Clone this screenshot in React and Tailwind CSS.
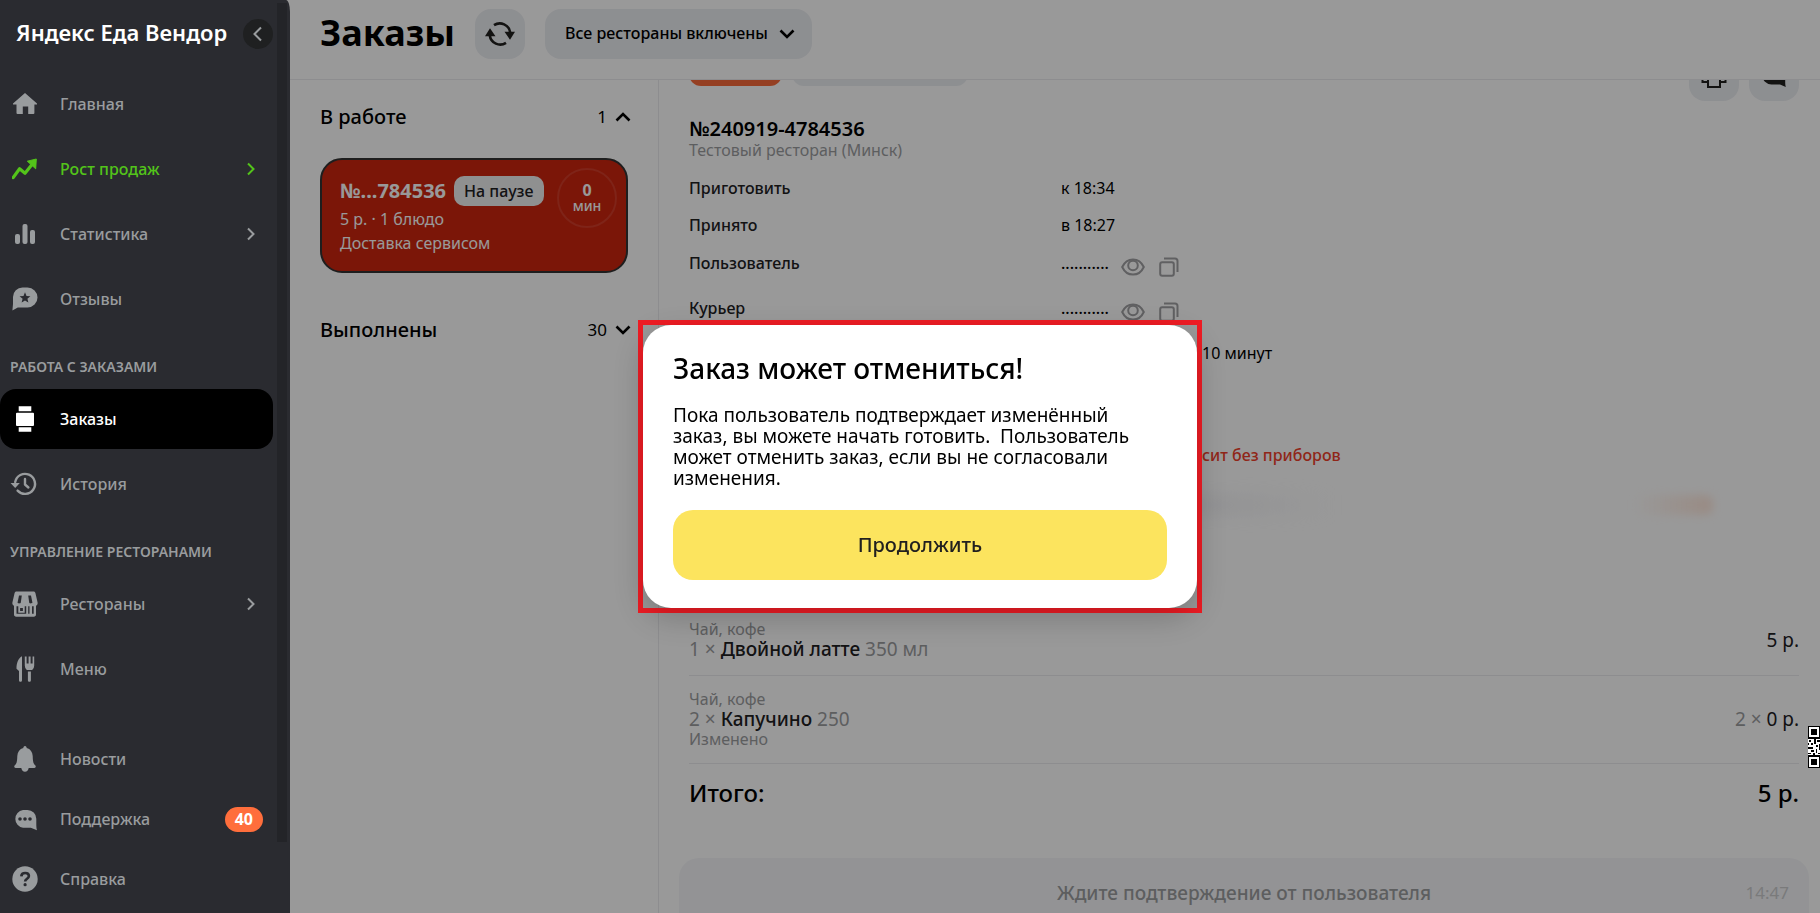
import React, { useState } from 'react';
import clsx from 'clsx';

const HomeIcon = () => (
    <svg width="26" height="26" viewBox="0 0 26 26" fill="currentColor">
        <path d="M13 2 25 12.6v.9h-2.600V22a1 1 0 0 1-1 1H16.200v-7.400h-5.400V23H5.500a1 1 0 0 1-1-1v-8.500H1v-.9z" />
    </svg>
);

const GrowthIcon = () => (
    <svg width="26" height="26" viewBox="0 0 26 26">
        <path d="M1.200 21.600 7.600 12.800 13 17.200 20 8.500" fill="none" stroke="currentColor" strokeWidth="3.200" strokeLinecap="round" strokeLinejoin="round" />
        <path d="M15.300 5.200 24.300 3l-.6 9.800z" fill="currentColor" stroke="currentColor" strokeLinejoin="round" />
    </svg>
);

const StatsIcon = () => (
    <svg width="26" height="26" viewBox="0 0 26 26" fill="currentColor">
        <rect x="3" y="13" width="5" height="10" rx="2" />
        <rect x="10.500" y="3" width="5" height="20" rx="2" />
        <rect x="18" y="9" width="5" height="14" rx="2" />
    </svg>
);

const ReviewsIcon = () => (
    <svg width="26" height="26" viewBox="0 0 26 26" fill="currentColor" fillRule="evenodd">
        <path d="M10.500 1.500h5a10 10 0 0 1 0 20H5.800L.4 24.600 1 18V11a9.500 9.500 0 0 1 9.500-9.500zM13 6.300l-1.500 3.600-3.900.3 3 2.500-1 3.800 3.400-2.100 3.400 2.100-1-3.800 3-2.500-3.900-.3z" />
    </svg>
);

const OrdersIcon = () => (
    <svg width="26" height="26" viewBox="0 0 26 26" fill="currentColor">
        <path d="M6.700.2h12.600v5H6.700zM5 6.700h16a1 1 0 0 1 1 1V19a1 1 0 0 1-1 1H5a1 1 0 0 1-1-1V7.700a1 1 0 0 1 1-1zM6.700 21.200h12.600v4.600H6.700z" />
    </svg>
);

const HistoryIcon = () => (
    <svg width="26" height="26" viewBox="0 0 26 26" className="overflow-visible">
        <path d="M3.200 11a10 10 0 1 1 2.400 8.600" fill="none" stroke="currentColor" strokeWidth="2.400" strokeLinecap="round" />
        <path d="M-1.500 12h9.300l-4.600 5z" fill="currentColor" />
        <path d="M13 8v5.500l3.400 3" fill="none" stroke="currentColor" strokeWidth="2.400" strokeLinecap="round" strokeLinejoin="round" />
    </svg>
);

const RestaurantsIcon = () => (
    <svg width="26" height="26" viewBox="0 0 26 26">
        <path
            fill="currentColor"
            fillRule="evenodd"
            d="M4.500.5h17c1 0 1.700.6 1.900 1.500l2.200 9.500c.3 1.600-.4 2.700-1.600 3.200V23.500c0 1.300-.9 2.200-2.200 2.200H4.200c-1.300 0-2.200-.9-2.200-2.200V14.700C.8 14.200.1 13.100.4 11.500L2.600 2C2.800 1.100 3.500.5 4.500.5zM7 4.500 5.600 11.500c0 1.200 3 1.200 3.200 0L9.800 4.500zM16.200 4.500l1 7c.2 1.200 3.200 1.200 3.200 0L19 4.500zM4.500 15.200V22.800h13V15.200zM20 15.200V22.800h1.700V15.200z"
        />
        <path d="M7.200 16h4.600v4.800H7.200z" fill="none" stroke="currentColor" strokeWidth="1.800" />
        <path d="M15.200 15v9" stroke="currentColor" strokeWidth="2" />
    </svg>
);

const MenuIcon = () => (
    <svg width="26" height="26" viewBox="0 0 26 26" fill="currentColor">
        <path d="M10 .2v24c0 2.200-3 2.200-3 0V15L4.500 12.800C4.400 7.500 6.200 2 10 .2z" />
        <path d="M12.800.6h1.800v6.900h2V.6h2v6.900h2V.6h1.600v8.800c0 3-2 4.700-3.100 4.700h-3.200c-1.100 0-3.100-1.700-3.100-4.700z" />
        <path d="M15.900 15.500h3v8.800c0 2-3 2-3 0z" />
    </svg>
);

const BellIcon = () => (
    <svg width="26" height="26" viewBox="0 0 26 26" fill="currentColor">
        <path d="M13 0c1.200 0 1.600 1 1.700 2 3.800 1 5.800 4 6 8 .2 6 .6 7.600 2.700 9.600.8 1 .2 2.400-1 2.400h-5.700c-.3 2.200-1.800 3.700-3.700 3.700s-3.400-1.500-3.700-3.700H3.600c-1.200 0-1.800-1.400-1-2.400 2.100-2 2.500-3.600 2.700-9.600.2-4 2.200-7 6-8 .1-1 .5-2 1.700-2z" />
    </svg>
);

const SupportIcon = () => (
    <svg width="26" height="26" viewBox="0 0 26 26" fill="currentColor" fillRule="evenodd">
        <path d="M11 4h4.500a8.800 8.800 0 0 1 8.800 8.800V18c0 2.500.2 4.500.7 6.300L18.800 21.800H11A9 9 0 0 1 11 4zM8 11.200a1.800 1.800 0 1 0 0 3.600 1.800 1.800 0 0 0 0-3.600zm5 0a1.800 1.800 0 1 0 0 3.600 1.800 1.800 0 0 0 0-3.600zm5 0a1.800 1.800 0 1 0 0 3.600 1.800 1.800 0 0 0 0-3.600z" />
    </svg>
);

const HelpIcon = () => (
    <svg width="26" height="26" viewBox="0 0 26 26">
        <circle cx="13" cy="13" r="12.700" fill="currentColor" />
        <path d="M9.300 10.300c.3-4.400 7.600-4.200 7.600-.2 0 2.600-3.800 2.600-3.800 5.400" fill="none" stroke="#2a2b30" strokeWidth="2.600" />
        <circle cx="13.100" cy="18.700" r="1.600" fill="#2a2b30" />
    </svg>
);

const Chevron = ({ d, width = 2.6 }) => (
    <svg width="16" height="16" viewBox="0 0 16 16" fill="none" stroke="currentColor" strokeWidth={width}>
        <path d={d} />
    </svg>
);

const UP = 'M1.500 11.500 8 5l6.500 6.500';
const DOWN = 'M1.500 4.500 8 11l6.500-6.500';
const LEFT = 'M11 1.500 4.500 8l6.500 6.500';
const RIGHT = 'M5 2.500 10.500 8 5 13.500';

const RefreshIcon = () => (
    <svg width="30" height="26" viewBox="0 0 30 26">
        <path d="M9 4.200a10.500 10.500 0 0 1 16.200 7.300M21 21.800A10.500 10.500 0 0 1 4.800 14.500" fill="none" stroke="currentColor" strokeWidth="2.600" />
        <path d="M19.500 10.800H30l-5 8zM10.500 15.200H0l5-8z" fill="currentColor" />
    </svg>
);

const PrinterIcon = () => (
    <svg width="26" height="26" viewBox="0 0 26 26" fill="none" stroke="currentColor" strokeWidth="2">
        <path d="M7 7V2h12v5M7 19H1.500V7h23v12H19M7 15h12v9H7z" />
    </svg>
);

const ChatIcon = () => (
    <svg width="26" height="26" viewBox="0 0 26 26" fill="currentColor">
        <path d="M10.500 3h5a9 9 0 0 1 8.700 9v5.500c0 2.500 0 4.500.6 6.500L19 21.400h-8.500A9.200 9.200 0 0 1 10.500 3z" />
    </svg>
);

const EyeIcon = () => (
    <svg width="24" height="20" viewBox="0 0 24 20" fill="none" stroke="currentColor" strokeWidth="2">
        <path d="M1.200 10C3.500 5 7.400 2.400 12 2.400S20.500 5 22.800 10c-2.300 5-6.200 7.600-10.800 7.600S3.500 15 1.200 10z" />
        <circle cx="12" cy="8.500" r="4.800" />
    </svg>
);

const CopyIcon = () => (
    <svg width="20" height="20" viewBox="0 0 20 20" fill="none" stroke="currentColor" strokeWidth="2">
        <rect x="1.200" y="5.200" width="13.600" height="13.600" rx="2" />
        <path d="M5 1.500h11a2.500 2.500 0 0 1 2.500 2.500v11" />
    </svg>
);

const QrEdge = () => (
    <svg width="12" height="42" viewBox="0 0 12 42" shapeRendering="crispEdges">
        <path d="M0 0h12v42H0z" fill="#fff" />
        <path d="M0 0h12v1H0zM0 0h1v12H0zM0 11h12v1H0zM11 0h1v12h-1zM3 3h6v6H3z" fill="#000" />
        <path d="M0 30h12v1H0zM0 30h1v12H0zM0 41h12v1H0zM11 30h1v12h-1zM3 33h6v6H3z" fill="#000" />
        <path d="M1 14h2v2H1zM6 13h2v5H6zM9 14h3v2H9zM0 17h1v2H0zM3 17h2v2H3zM8 19h2v2H8zM0 21h5v2H0zM11 18h1v6h-1zM3 24h3v2H3zM8 23h1v4H8zM0 27h3v1H0zM5 27h2v2H5zM10 27h2v1h-2z" fill="#000" />
        <path d="M0 0h12v12H0zM0 30h12v12H0z" fill="none" stroke="#000" strokeWidth="2" />
    </svg>
);

const mainLinks = [
    { label: 'Главная', icon: HomeIcon },
    { label: 'Рост продаж', icon: GrowthIcon, arrow: true, green: true },
    { label: 'Статистика', icon: StatsIcon, arrow: true },
    { label: 'Отзывы', icon: ReviewsIcon },
];

const orderLinks = [
    { label: 'Заказы', icon: OrdersIcon, active: true },
    { label: 'История', icon: HistoryIcon },
];

const restaurantLinks = [
    { label: 'Рестораны', icon: RestaurantsIcon, arrow: true },
    { label: 'Меню', icon: MenuIcon },
];

const bottomLinks = [
    { label: 'Новости', icon: BellIcon },
    { label: 'Поддержка', icon: SupportIcon, badge: 40 },
    { label: 'Справка', icon: HelpIcon },
];

const NavLink = ({ item }) => {
    const Icon = item.icon;
    return (
        <a
            href="#"
            className={clsx(
                'flex h-[60px] items-center rounded-2xl pr-[10px] text-base font-medium',
                item.active && 'bg-black text-white',
                item.green && 'text-[#53c41a]',
                !item.active && !item.green && 'text-[#999c9e]'
            )}
        >
            <span className="flex w-[60px] shrink-0 items-center pl-3"><Icon /></span>
            <span className="flex-1">{item.label}</span>
            {item.arrow && <span className="mr-1"><Chevron d={RIGHT} width={2} /></span>}
            {item.badge && (
                <span className="rounded-full bg-[#ff6e3c] px-[10px] text-base leading-[25px] font-bold text-white">{item.badge}</span>
            )}
        </a>
    );
};

const NavHeading = ({ children }) => (
    <h3 className="flex h-[60px] items-center pt-4 pl-[10px] text-sm font-semibold text-[#999c9e] uppercase">{children}</h3>
);

const Sidebar = () => (
    <aside className="relative z-10 flex w-[290px] shrink-0 rounded-tr-[4px_12px] bg-[#2a2b30] pr-[3px]">
        <div className="flex-1 pr-1">
            <div className="flex h-[68px] items-center justify-between pl-4">
                <span className="pb-1 text-[22px] font-semibold whitespace-nowrap text-white">Яндекс Еда Вендор</span>
                <button aria-label="Свернуть меню" className="flex size-[30px] items-center justify-center rounded-full bg-[#1f2021] text-[#999c9e]">
                    <Chevron d={LEFT} width={2} />
                </button>
            </div>
            <nav>
                <div className="flex flex-col gap-[5px] pt-[6px]">
                    {mainLinks.map(item => <NavLink key={item.label} item={item} />)}
                </div>
                <NavHeading>Работа с заказами</NavHeading>
                <div className="flex flex-col gap-[5px]">
                    {orderLinks.map(item => <NavLink key={item.label} item={item} />)}
                </div>
                <NavHeading>Управление ресторанами</NavHeading>
                <div className="flex flex-col gap-[5px]">
                    {restaurantLinks.map(item => <NavLink key={item.label} item={item} />)}
                </div>
                <div className="pt-[30px]">
                    {bottomLinks.map(item => <NavLink key={item.label} item={item} />)}
                </div>
            </nav>
        </div>
        {/* scrollbar thumb */}
        <div className="mt-[3px] mb-[71px] w-[10px] bg-[#232428]" />
    </aside>
);

const ListHeader = ({ title, count, icon }) => (
    <div className="flex h-7 items-center justify-between text-black">
        <h2 className="text-xl font-medium">{title}</h2>
        <button className="flex items-center gap-2 text-[17px]">
            {count}
            <Chevron d={icon} />
        </button>
    </div>
);

const OrderList = () => (
    <section className="w-[369px] shrink-0 border-r border-[#ececee] pt-[23px] pr-[27px] pl-[30px]">
        <ListHeader title="В работе" count="1" icon={UP} />
        <article className="mt-[27px] mr-[3px] flex rounded-[22px] border-2 border-[#333] bg-[#cd250e] text-white">
            <div className="flex-1 pt-4 pb-4 pl-[18px]">
                <div className="flex h-[30px] items-center gap-2 whitespace-nowrap">
                    <b className="text-xl font-bold">№...784536</b>
                    <span className="rounded-[10px] bg-[#eff1f1] px-[10px] text-base leading-[30px] font-medium text-[#21201f]">На паузе</span>
                </div>
                <p className="mt-px text-base">5 р. · 1 блюдо</p>
                <p className="text-base">Доставка сервисом</p>
            </div>
            <div className="mt-2 mr-[9px] flex size-[60px] shrink-0 flex-col items-center justify-center rounded-full border-2 border-[#d43c28]">
                <b className="text-base leading-4 font-bold">0</b>
                <span className="text-sm leading-4 font-medium">мин</span>
            </div>
        </article>
        <div className="mt-[43px]">
            <ListHeader title="Выполнены" count="30" icon={DOWN} />
        </div>
    </section>
);

const HiddenContact = () => (
    <span className="flex h-6 items-center gap-3">
        <span className="font-medium">...........</span>
        <button aria-label="Показать" className="pt-2 text-[#a1a1a3]"><EyeIcon /></button>
        <button aria-label="Скопировать" className="pt-2 pl-[2px] text-[#a1a1a3]"><CopyIcon /></button>
    </span>
);

const InfoRow = ({ label, className, children }) => (
    <div className={clsx('flex text-base', className)}>
        <dt className="w-1/3 font-medium text-[#21201f]">{label}</dt>
        <dd className="pl-[2px]">{children}</dd>
    </div>
);

const OrderItem = ({ count, name, size, note, price, priceCount }) => (
    <li className="flex items-center justify-between border-b border-[#ececee] pt-[14px] pb-[15px]">
        <div className="text-base leading-[18px] text-[#9c9d9f]">
            <p>Чай, кофе</p>
            <p className="text-[19px] leading-[22px]">
                {count} × <span className="font-medium text-[#21201f]">{name}</span> {size}
            </p>
            {note && <p>{note}</p>}
        </div>
        <span className="text-[19px] leading-[22px] text-[#21201f]">
            {priceCount && <span className="text-[#9c9d9f]">{priceCount} × </span>}
            {price}
        </span>
    </li>
);

const OrderDetails = () => (
    <section className="min-w-0 flex-1 overflow-hidden">
        <div className="pr-[21px] pl-[30px]">
            <div className="-mt-[29px] flex items-start">
                <button aria-label="Отменить" className="h-[35px] w-[93px] rounded-xl bg-[#f96a3a]" />
                <button aria-label="Изменить заказ" className="ml-[10px] h-[35px] w-[176px] rounded-xl bg-[#eceef2]" />
                <div className="ml-auto flex gap-[10px] text-[#21201f]">
                    <button aria-label="Печать" className="flex size-[50px] items-center justify-center rounded-2xl bg-[#eceef2]"><PrinterIcon /></button>
                    <button aria-label="Чат" className="flex size-[50px] items-center justify-center rounded-2xl bg-[#eceef2]"><ChatIcon /></button>
                </div>
            </div>
            <h2 className="mt-[17px] text-xl leading-[22px] font-semibold text-black">№240919-4784536</h2>
            <p className="text-base leading-5 text-[#9c9d9f]">Тестовый ресторан (Минск)</p>

            <dl className="mt-4 text-black">
                <InfoRow label="Приготовить" className="h-[37px]">к 18:34</InfoRow>
                <InfoRow label="Принято" className="h-[38px]">в 18:27</InfoRow>
                <InfoRow label="Пользователь" className="h-[45px]"><HiddenContact /></InfoRow>
                <InfoRow label="Курьер" className="h-[45px]"><HiddenContact /></InfoRow>
                <InfoRow className="h-[102px]">
                    <span className="pl-[141px]">10 минут</span>
                </InfoRow>
                <InfoRow>
                    <span className="pl-[141px] font-medium text-[#f0402b]">сит без приборов</span>
                </InfoRow>
            </dl>
            <div className="flex h-[139px] items-start justify-end pt-7 pr-[86px]">
                <div className="mr-[300px] h-5 w-[240px] bg-linear-to-r from-[#e9e9ee] to-transparent blur-sm" />
                <div className="h-5 w-[80px] rounded-lg bg-linear-to-r from-transparent to-[#ffe8dc] blur-xs" />
            </div>

            <ul>
                <OrderItem count="1" name="Двойной латте" size="350 мл" price="5 р." />
                <OrderItem count="2" name="Капучино" size="250" note="Изменено" price="0 р." priceCount="2" />
            </ul>
            <div className="flex justify-between pt-[13px] text-2xl font-medium text-black">
                <span>Итого:</span>
                <span>5 р.</span>
            </div>
        </div>
        <footer className="mt-[49px] mr-[11px] ml-5 grid h-20 grid-cols-[1fr_auto_1fr] rounded-t-[20px] bg-[#f5f6f9] px-5 pt-[21px] leading-7">
            <span />
            <span className="text-[19px] leading-7 font-medium text-[#9c9d9f]">Ждите подтверждение от пользователя</span>
            <time className="text-right text-[17px] text-[#cbccce]">14:47</time>
        </footer>
    </section>
);

const Modal = ({ onClose }) => (
    <div className="fixed inset-0 z-20 flex items-center justify-center pt-5 pl-5">
        <div className="w-[564px] border-[5px] border-[#ee1c24]">
            <div role="dialog" aria-labelledby="modal-title" className="rounded-[28px] bg-white px-[30px] pt-6 pb-[28px] text-black shadow-[0_10px_30px_rgba(0,0,0,0.2)]">
                <h2 id="modal-title" className="text-[28px] leading-[38px] font-medium">Заказ может отмениться!</h2>
                <p className="mt-[18px] text-[19px] leading-[21px]">
                    Пока пользователь подтверждает изменённый заказ, вы можете начать готовить.&nbsp; Пользователь может отменить заказ, если вы не согласовали изменения.
                </p>
                <button onClick={onClose} className="mt-[21px] h-[70px] w-full rounded-[20px] bg-[#fce45e] text-xl font-medium text-[#21201f]">
                    Продолжить
                </button>
            </div>
        </div>
    </div>
);

const App = () => {
    const [modalOpen, setModalOpen] = useState(true);

    return (
        <div className="flex h-screen overflow-hidden bg-[#999] font-['Noto_Sans',sans-serif]">
            <Sidebar />
            <main className="relative flex min-w-0 flex-1 flex-col bg-white">
                <header className="flex h-20 shrink-0 items-start border-b border-[#ececee] pt-[9px] pl-[30px]">
                    <h1 className="text-[36px] leading-[48px] font-bold text-black">Заказы</h1>
                    <button aria-label="Обновить" className="ml-5 flex size-[50px] items-center justify-center rounded-2xl bg-[#eceef2] text-[#21201f]">
                        <RefreshIcon />
                    </button>
                    <div className="relative ml-5">
                        <select aria-label="Рестораны" className="h-[50px] w-[267px] appearance-none rounded-2xl bg-[#eceef2] pb-[2px] pl-5 text-base font-medium text-black">
                            <option>Все рестораны включены</option>
                        </select>
                        <span className="pointer-events-none absolute top-[17px] right-[17px] text-black"><Chevron d={DOWN} /></span>
                    </div>
                </header>
                <div className="flex min-h-0 flex-1">
                    <OrderList />
                    <OrderDetails />
                </div>
                {modalOpen && <div className="absolute inset-0 bg-black/40" />}
                <div className="absolute right-0 bottom-[145px]"><QrEdge /></div>
            </main>
            {modalOpen && <Modal onClose={() => setModalOpen(false)} />}
        </div>
    );
};

export default App;
